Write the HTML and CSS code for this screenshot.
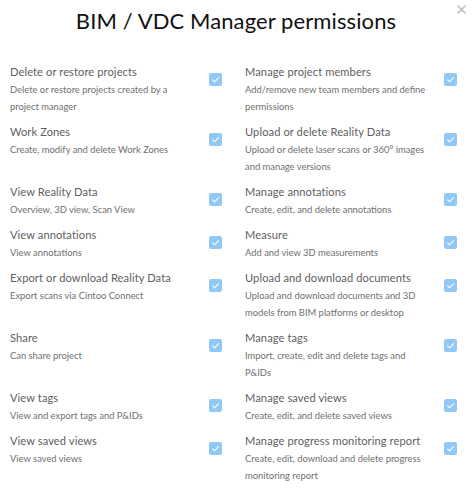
FILE: index.html
```html
<!DOCTYPE html>
<html>
<head>
<meta charset="utf-8">
<link rel="stylesheet" href="styles.css">
</head>
<body>
<div class="modal">
  <button class="close" aria-label="Close">
    <svg width="9" height="9" viewBox="0 0 9 9"><path d="M1 1L8 8M8 1L1 8" stroke="#bdbdbd" stroke-width="1.6" stroke-linecap="round"/></svg>
  </button>
  <h1 class="title">BIM / VDC Manager permissions</h1>
  <div class="grid">
    <div class="perm"><div class="txt"><div class="name">Delete or restore projects</div><div class="desc">Delete or restore projects created by a project manager</div></div><span class="cb"><svg viewBox="0 0 14 14"><path d="M3.6 7.2L6 9.5L10.6 4.8" fill="none" stroke="#fff" stroke-width="1.2"/></svg></span></div>
    <div class="perm"><div class="txt"><div class="name">Manage project members</div><div class="desc">Add/remove new team members and define permissions</div></div><span class="cb"><svg viewBox="0 0 14 14"><path d="M3.6 7.2L6 9.5L10.6 4.8" fill="none" stroke="#fff" stroke-width="1.2"/></svg></span></div>
    <div class="perm"><div class="txt"><div class="name">Work Zones</div><div class="desc">Create, modify and delete Work Zones</div></div><span class="cb"><svg viewBox="0 0 14 14"><path d="M3.6 7.2L6 9.5L10.6 4.8" fill="none" stroke="#fff" stroke-width="1.2"/></svg></span></div>
    <div class="perm"><div class="txt"><div class="name">Upload or delete Reality Data</div><div class="desc">Upload or delete laser scans or 360° images and manage versions</div></div><span class="cb"><svg viewBox="0 0 14 14"><path d="M3.6 7.2L6 9.5L10.6 4.8" fill="none" stroke="#fff" stroke-width="1.2"/></svg></span></div>
    <div class="perm"><div class="txt"><div class="name">View Reality Data</div><div class="desc">Overview, 3D view, Scan View</div></div><span class="cb"><svg viewBox="0 0 14 14"><path d="M3.6 7.2L6 9.5L10.6 4.8" fill="none" stroke="#fff" stroke-width="1.2"/></svg></span></div>
    <div class="perm"><div class="txt"><div class="name">Manage annotations</div><div class="desc">Create, edit, and delete annotations</div></div><span class="cb"><svg viewBox="0 0 14 14"><path d="M3.6 7.2L6 9.5L10.6 4.8" fill="none" stroke="#fff" stroke-width="1.2"/></svg></span></div>
    <div class="perm"><div class="txt"><div class="name">View annotations</div><div class="desc">View annotations</div></div><span class="cb"><svg viewBox="0 0 14 14"><path d="M3.6 7.2L6 9.5L10.6 4.8" fill="none" stroke="#fff" stroke-width="1.2"/></svg></span></div>
    <div class="perm"><div class="txt"><div class="name">Measure</div><div class="desc">Add and view 3D measurements</div></div><span class="cb"><svg viewBox="0 0 14 14"><path d="M3.6 7.2L6 9.5L10.6 4.8" fill="none" stroke="#fff" stroke-width="1.2"/></svg></span></div>
    <div class="perm"><div class="txt"><div class="name">Export or download Reality Data</div><div class="desc">Export scans via Cintoo Connect</div></div><span class="cb"><svg viewBox="0 0 14 14"><path d="M3.6 7.2L6 9.5L10.6 4.8" fill="none" stroke="#fff" stroke-width="1.2"/></svg></span></div>
    <div class="perm"><div class="txt"><div class="name">Upload and download documents</div><div class="desc">Upload and download documents and 3D models from BIM platforms or desktop</div></div><span class="cb"><svg viewBox="0 0 14 14"><path d="M3.6 7.2L6 9.5L10.6 4.8" fill="none" stroke="#fff" stroke-width="1.2"/></svg></span></div>
    <div class="perm"><div class="txt"><div class="name">Share</div><div class="desc">Can share project</div></div><span class="cb"><svg viewBox="0 0 14 14"><path d="M3.6 7.2L6 9.5L10.6 4.8" fill="none" stroke="#fff" stroke-width="1.2"/></svg></span></div>
    <div class="perm"><div class="txt"><div class="name">Manage tags</div><div class="desc">Import, create, edit and delete tags and P&amp;IDs</div></div><span class="cb"><svg viewBox="0 0 14 14"><path d="M3.6 7.2L6 9.5L10.6 4.8" fill="none" stroke="#fff" stroke-width="1.2"/></svg></span></div>
    <div class="perm"><div class="txt"><div class="name">View tags</div><div class="desc">View and export tags and P&amp;IDs</div></div><span class="cb"><svg viewBox="0 0 14 14"><path d="M3.6 7.2L6 9.5L10.6 4.8" fill="none" stroke="#fff" stroke-width="1.2"/></svg></span></div>
    <div class="perm"><div class="txt"><div class="name">Manage saved views</div><div class="desc">Create, edit, and delete saved views</div></div><span class="cb"><svg viewBox="0 0 14 14"><path d="M3.6 7.2L6 9.5L10.6 4.8" fill="none" stroke="#fff" stroke-width="1.2"/></svg></span></div>
    <div class="perm"><div class="txt"><div class="name">View saved views</div><div class="desc">View saved views</div></div><span class="cb"><svg viewBox="0 0 14 14"><path d="M3.6 7.2L6 9.5L10.6 4.8" fill="none" stroke="#fff" stroke-width="1.2"/></svg></span></div>
    <div class="perm"><div class="txt"><div class="name">Manage progress monitoring report</div><div class="desc">Create, edit, download and delete progress monitoring report</div></div><span class="cb"><svg viewBox="0 0 14 14"><path d="M3.6 7.2L6 9.5L10.6 4.8" fill="none" stroke="#fff" stroke-width="1.2"/></svg></span></div>
  </div>
</div>
</body>
</html>
```

FILE: styles.css
```css
html, body {
  margin: 0;
  padding: 0;
  background: #fff;
}
body {
  font-family: "Lato", "Liberation Sans", sans-serif;
}
.modal {
  position: relative;
  width: 474px;
  height: 494px;
  box-sizing: border-box;
  padding: 0 12px 0 10px;
}
.close {
  position: absolute;
  top: 5px;
  right: 8px;
  padding: 0;
  border: 0;
  background: none;
  width: 9px;
  height: 9px;
  display: flex;
}
.title {
  margin: 0;
  padding-top: 7px;
  height: 63px;
  box-sizing: border-box;
  text-align: center;
  font-size: 22px;
  line-height: 28px;
  font-weight: 400;
  letter-spacing: 0.1px;
  color: #111;
}
.grid {
  display: grid;
  grid-template-columns: 1fr 1fr;
  column-gap: 18px;
  row-gap: 8px;
}
.perm {
  display: flex;
  align-items: flex-start;
  justify-content: space-between;
}
.txt {
  flex: 1;
  min-width: 0;
}
.name {
  font-size: 11.1px;
  line-height: 18px;
  letter-spacing: 0.1px;
  color: #606060;
}
.desc {
  font-size: 9.4px;
  line-height: 17px;
  color: #707070;
  max-width: 185px;
}
.cb {
  flex: none;
  width: 13px;
  height: 13px;
  margin-top: 10px;
  margin-right: 5px;
  border-radius: 2px;
  background: #90c9f8;
  display: flex;
}
.cb svg {
  width: 13px;
  height: 13px;
}
```
